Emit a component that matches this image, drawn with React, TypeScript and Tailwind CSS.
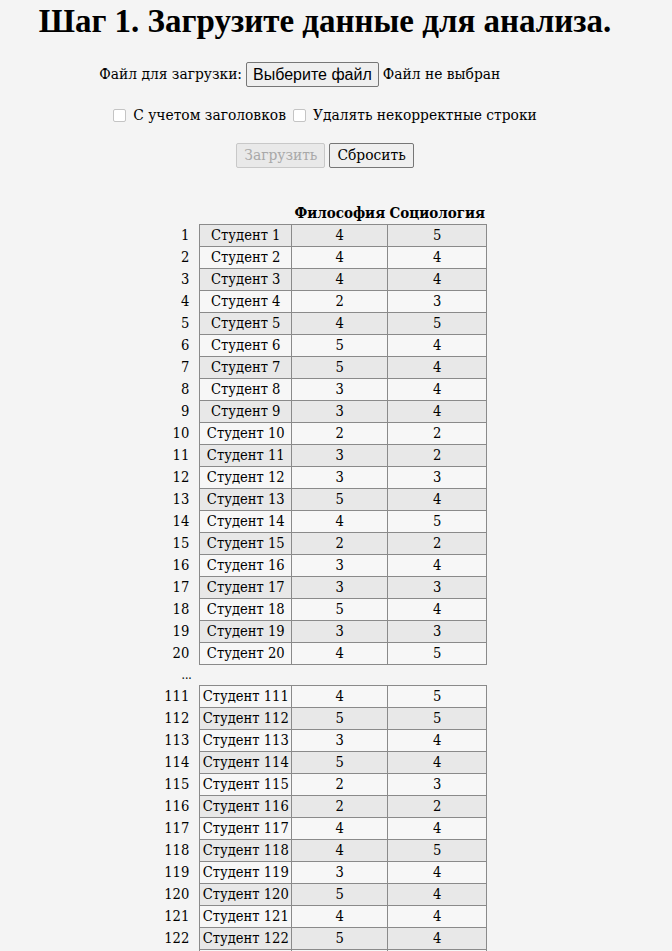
import { useState } from "react";

type Row = { id: number; ph: number; soc: number };

const first: Row[] = [
  { id: 1, ph: 4, soc: 5 },
  { id: 2, ph: 4, soc: 4 },
  { id: 3, ph: 4, soc: 4 },
  { id: 4, ph: 2, soc: 3 },
  { id: 5, ph: 4, soc: 5 },
  { id: 6, ph: 5, soc: 4 },
  { id: 7, ph: 5, soc: 4 },
  { id: 8, ph: 3, soc: 4 },
  { id: 9, ph: 3, soc: 4 },
  { id: 10, ph: 2, soc: 2 },
  { id: 11, ph: 3, soc: 2 },
  { id: 12, ph: 3, soc: 3 },
  { id: 13, ph: 5, soc: 4 },
  { id: 14, ph: 4, soc: 5 },
  { id: 15, ph: 2, soc: 2 },
  { id: 16, ph: 3, soc: 4 },
  { id: 17, ph: 3, soc: 3 },
  { id: 18, ph: 5, soc: 4 },
  { id: 19, ph: 3, soc: 3 },
  { id: 20, ph: 4, soc: 5 },
];

const last: Row[] = [
  { id: 111, ph: 4, soc: 5 },
  { id: 112, ph: 5, soc: 5 },
  { id: 113, ph: 3, soc: 4 },
  { id: 114, ph: 5, soc: 4 },
  { id: 115, ph: 2, soc: 3 },
  { id: 116, ph: 2, soc: 2 },
  { id: 117, ph: 4, soc: 4 },
  { id: 118, ph: 4, soc: 5 },
  { id: 119, ph: 3, soc: 4 },
  { id: 120, ph: 5, soc: 4 },
  { id: 121, ph: 4, soc: 4 },
  { id: 122, ph: 5, soc: 4 },
  { id: 123, ph: 4, soc: 3 },
];

const cell = "border border-[#8a8a8a] h-[22px] p-0 text-center leading-[20px]";

function DataRow({ row, dark }: { row: Row; dark: boolean }) {
  const bg = dark ? "bg-[#e8e8e8]" : "bg-[#f7f7f7]";
  return (
    <tr>
      <td className="p-0 pr-[10px] text-right leading-[20px]">{row.id}</td>
      <td className={`${cell} ${bg} whitespace-nowrap`}>Студент {row.id}</td>
      <td className={`${cell} ${bg}`}>{row.ph}</td>
      <td className={`${cell} ${bg}`}>{row.soc}</td>
    </tr>
  );
}

export default function App() {
  const [headers, setHeaders] = useState(false);
  const [dropBad, setDropBad] = useState(false);

  return (
    <div className="min-h-[951px] bg-[#f4f4f4] text-black font-['DejaVu_Serif_Condensed','DejaVu_Serif',serif] font-stretch-condensed text-[15.4px]">
      <div className="w-[650px]">
        <h1 className="pt-[2px] text-center font-['Liberation_Serif',serif] text-[33px] font-bold leading-[38px]">
          Шаг 1. Загрузите данные для анализа.
        </h1>

        {/* upload form */}
        <div className="mt-[22px] flex items-center justify-center">
          <span className="mr-[4px]">Файл для загрузки:</span>
          <label className="flex h-[25px] items-center rounded-[2px] border border-[#767676] bg-[#efefef] px-[6px] font-['Liberation_Sans',sans-serif] font-stretch-normal text-[16px]">
            Выберите файл
            <input type="file" className="hidden" />
          </label>
          <span className="ml-[4px] w-[168px]">Файл не выбран</span>
        </div>

        <div className="mt-[17px] flex items-center justify-center">
          <label className="flex items-center">
            <input
              type="checkbox"
              checked={headers}
              onChange={(e) => setHeaders(e.target.checked)}
              className="mr-[7px] h-[13px] w-[13px] appearance-none rounded-[2px] border border-[#c4c4c4] bg-white checked:bg-[#0075ff]"
            />
            С учетом заголовков
          </label>
          <label className="ml-[7px] flex items-center">
            <input
              type="checkbox"
              checked={dropBad}
              onChange={(e) => setDropBad(e.target.checked)}
              className="mr-[7px] h-[13px] w-[13px] appearance-none rounded-[2px] border border-[#c4c4c4] bg-white checked:bg-[#0075ff]"
            />
            Удалять некорректные строки
          </label>
        </div>

        <div className="mt-[16px] flex items-center justify-center gap-[4px]">
          <button
            disabled
            className="h-[25px] rounded-[2px] border border-[#c8c8c8] bg-[#e9e9e9] px-[7px] text-[#a8a8a8]"
          >
            Загрузить
          </button>
          <button className="h-[25px] rounded-[2px] border border-[#767676] bg-[#efefef] px-[7px]">
            Сбросить
          </button>
        </div>

        {/* data table */}
        <table className="mx-auto mt-[34px] border-collapse text-[14.6px]">
          <colgroup>
            <col className="w-[37px]" />
            <col className="w-[92px]" />
            <col className="w-[96px]" />
            <col className="w-[99px]" />
          </colgroup>
          <thead>
            <tr>
              <th className="h-[22px] p-0"></th>
              <th className="p-0"></th>
              <th className="p-0 text-center whitespace-nowrap text-[15px] leading-[20px]">Философия</th>
              <th className="p-0 text-center whitespace-nowrap text-[15px] leading-[20px]">Социология</th>
            </tr>
          </thead>
          <tbody>
            {first.map((r, i) => (
              <DataRow key={r.id} row={r} dark={i % 2 === 0} />
            ))}
            <tr>
              <td className="h-[21px] p-0 pr-[8px] text-right text-[12px] leading-[12px]">...</td>
              <td className="p-0"></td>
              <td className="p-0"></td>
              <td className="p-0"></td>
            </tr>
            {last.map((r, i) => (
              <DataRow key={r.id} row={r} dark={i % 2 === 1} />
            ))}
          </tbody>
        </table>
      </div>
    </div>
  );
}
